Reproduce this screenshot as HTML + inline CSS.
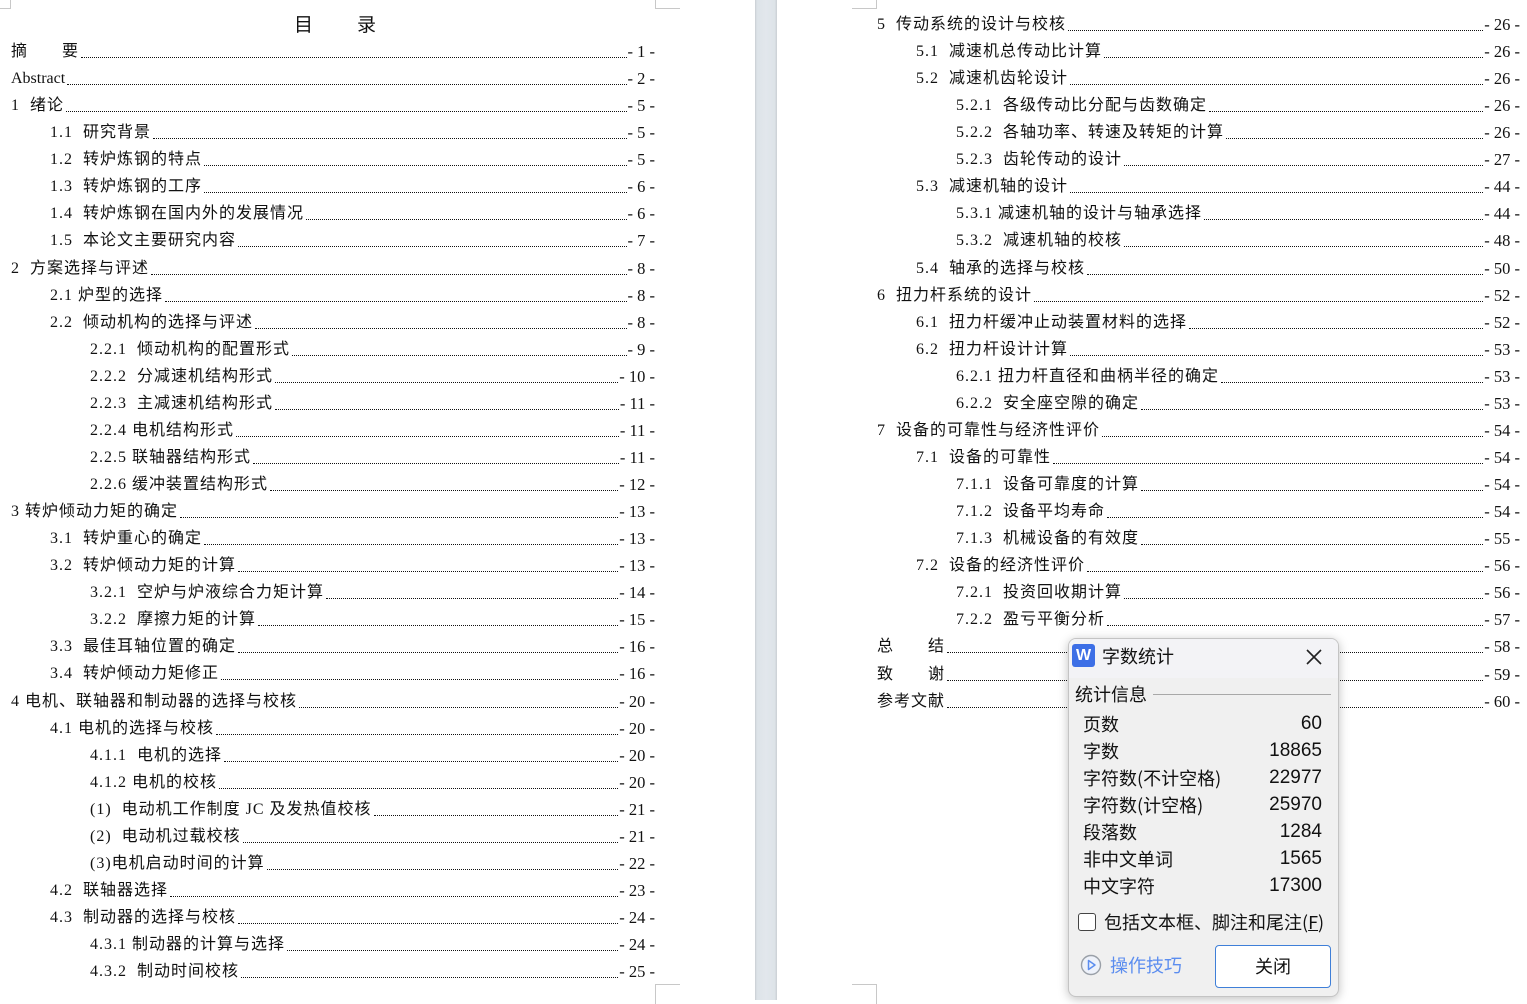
<!DOCTYPE html>
<html><head><meta charset="utf-8"><style>
*{margin:0;padding:0;box-sizing:border-box}
body{width:1527px;height:1000px;position:relative;background:#fff;overflow:hidden;font-family:"Liberation Serif","Noto Sans CJK SC",serif;color:#111}
.gap{position:absolute;left:755px;top:0;width:22px;height:1000px;background:linear-gradient(90deg,#c9ced3 0,#dde3e8 2px,#e2e7ec 50%,#dde3e8 90%,#c9ced3 100%)}
.r{position:absolute;height:22px;display:flex;align-items:flex-end;font-size:16px;line-height:22px;white-space:nowrap;margin-top:2px}
.t{font-family:"Liberation Serif","Noto Sans CJK SC",serif;letter-spacing:1px}
.d{flex:1;border-bottom:1px dotted #111;margin:0 1px 5px 2px}
.p{font-family:"Liberation Serif",serif;font-size:16.5px}
.L{right:872px}
.R{right:7px}
.cm{position:absolute;border-color:#c8c8c8;border-style:solid;border-width:0}
.dlg{position:absolute;left:1068px;top:638px;width:271px;height:359px;background:#f0f0f0;border:1px solid #c4c4c4;border-radius:8px;box-shadow:0 2px 10px rgba(0,0,0,.25);font-family:"Noto Sans CJK SC",sans-serif;color:#111;overflow:hidden}
.tb{position:absolute;left:0;top:0;width:100%;height:39px;background:#f3f3f6}
.row{position:absolute;left:14px;width:239px;font-size:18px;line-height:24px;display:flex;justify-content:space-between}
.row span:last-child{font-family:"Liberation Sans",sans-serif;font-size:19px}
</style></head><body>
<div class="gap"></div>
<div class="cm" style="left:655px;top:0;width:25px;height:9px;border-left-width:1px;border-bottom-width:1px"></div>
<div class="cm" style="left:0;top:0;width:11px;height:9px;border-right-width:1px;border-bottom-width:1px"></div>
<div class="cm" style="left:852px;top:0;width:25px;height:9px;border-right-width:1px;border-bottom-width:1px"></div>
<div class="cm" style="left:655px;top:984px;width:25px;height:20px;border-left-width:1px;border-top-width:1px"></div>
<div class="cm" style="left:852px;top:984px;width:25px;height:20px;border-right-width:1px;border-top-width:1px"></div>
<div style="position:absolute;left:294px;top:10px;font-size:19px;font-family:'Noto Sans CJK SC',sans-serif;letter-spacing:2px">目&emsp;&emsp;录</div>

<div class="r L" style="top:39px;left:11px"><span class="t">摘&emsp;&emsp;要</span><span class="d"></span><span class="p">- 1 -</span></div>
<div class="r L" style="top:66px;left:11px"><span class="t" style="letter-spacing:0">Abstract</span><span class="d"></span><span class="p">- 2 -</span></div>
<div class="r L" style="top:93px;left:11px"><span class="t">1&nbsp; 绪论</span><span class="d"></span><span class="p">- 5 -</span></div>
<div class="r L" style="top:120px;left:50px"><span class="t">1.1&nbsp; 研究背景</span><span class="d"></span><span class="p">- 5 -</span></div>
<div class="r L" style="top:147px;left:50px"><span class="t">1.2&nbsp; 转炉炼钢的特点</span><span class="d"></span><span class="p">- 5 -</span></div>
<div class="r L" style="top:174px;left:50px"><span class="t">1.3&nbsp; 转炉炼钢的工序</span><span class="d"></span><span class="p">- 6 -</span></div>
<div class="r L" style="top:201px;left:50px"><span class="t">1.4&nbsp; 转炉炼钢在国内外的发展情况</span><span class="d"></span><span class="p">- 6 -</span></div>
<div class="r L" style="top:228px;left:50px"><span class="t">1.5&nbsp; 本论文主要研究内容</span><span class="d"></span><span class="p">- 7 -</span></div>
<div class="r L" style="top:256px;left:11px"><span class="t">2&nbsp; 方案选择与评述</span><span class="d"></span><span class="p">- 8 -</span></div>
<div class="r L" style="top:283px;left:50px"><span class="t">2.1 炉型的选择</span><span class="d"></span><span class="p">- 8 -</span></div>
<div class="r L" style="top:310px;left:50px"><span class="t">2.2&nbsp; 倾动机构的选择与评述</span><span class="d"></span><span class="p">- 8 -</span></div>
<div class="r L" style="top:337px;left:90px"><span class="t">2.2.1&nbsp; 倾动机构的配置形式</span><span class="d"></span><span class="p">- 9 -</span></div>
<div class="r L" style="top:364px;left:90px"><span class="t">2.2.2&nbsp; 分减速机结构形式</span><span class="d"></span><span class="p">- 10 -</span></div>
<div class="r L" style="top:391px;left:90px"><span class="t">2.2.3&nbsp; 主减速机结构形式</span><span class="d"></span><span class="p">- 11 -</span></div>
<div class="r L" style="top:418px;left:90px"><span class="t">2.2.4 电机结构形式</span><span class="d"></span><span class="p">- 11 -</span></div>
<div class="r L" style="top:445px;left:90px"><span class="t">2.2.5 联轴器结构形式</span><span class="d"></span><span class="p">- 11 -</span></div>
<div class="r L" style="top:472px;left:90px"><span class="t">2.2.6 缓冲装置结构形式</span><span class="d"></span><span class="p">- 12 -</span></div>
<div class="r L" style="top:499px;left:11px"><span class="t">3 转炉倾动力矩的确定</span><span class="d"></span><span class="p">- 13 -</span></div>
<div class="r L" style="top:526px;left:50px"><span class="t">3.1&nbsp; 转炉重心的确定</span><span class="d"></span><span class="p">- 13 -</span></div>
<div class="r L" style="top:553px;left:50px"><span class="t">3.2&nbsp; 转炉倾动力矩的计算</span><span class="d"></span><span class="p">- 13 -</span></div>
<div class="r L" style="top:580px;left:90px"><span class="t">3.2.1&nbsp; 空炉与炉液综合力矩计算</span><span class="d"></span><span class="p">- 14 -</span></div>
<div class="r L" style="top:607px;left:90px"><span class="t">3.2.2&nbsp; 摩擦力矩的计算</span><span class="d"></span><span class="p">- 15 -</span></div>
<div class="r L" style="top:634px;left:50px"><span class="t">3.3&nbsp; 最佳耳轴位置的确定</span><span class="d"></span><span class="p">- 16 -</span></div>
<div class="r L" style="top:661px;left:50px"><span class="t">3.4&nbsp; 转炉倾动力矩修正</span><span class="d"></span><span class="p">- 16 -</span></div>
<div class="r L" style="top:689px;left:11px"><span class="t">4 电机、联轴器和制动器的选择与校核</span><span class="d"></span><span class="p">- 20 -</span></div>
<div class="r L" style="top:716px;left:50px"><span class="t">4.1 电机的选择与校核</span><span class="d"></span><span class="p">- 20 -</span></div>
<div class="r L" style="top:743px;left:90px"><span class="t">4.1.1&nbsp; 电机的选择</span><span class="d"></span><span class="p">- 20 -</span></div>
<div class="r L" style="top:770px;left:90px"><span class="t">4.1.2 电机的校核</span><span class="d"></span><span class="p">- 20 -</span></div>
<div class="r L" style="top:797px;left:90px"><span class="t">(1)&nbsp; 电动机工作制度 JC 及发热值校核</span><span class="d"></span><span class="p">- 21 -</span></div>
<div class="r L" style="top:824px;left:90px"><span class="t">(2)&nbsp; 电动机过载校核</span><span class="d"></span><span class="p">- 21 -</span></div>
<div class="r L" style="top:851px;left:90px"><span class="t">(3)电机启动时间的计算</span><span class="d"></span><span class="p">- 22 -</span></div>
<div class="r L" style="top:878px;left:50px"><span class="t">4.2&nbsp; 联轴器选择</span><span class="d"></span><span class="p">- 23 -</span></div>
<div class="r L" style="top:905px;left:50px"><span class="t">4.3&nbsp; 制动器的选择与校核</span><span class="d"></span><span class="p">- 24 -</span></div>
<div class="r L" style="top:932px;left:90px"><span class="t">4.3.1 制动器的计算与选择</span><span class="d"></span><span class="p">- 24 -</span></div>
<div class="r L" style="top:959px;left:90px"><span class="t">4.3.2&nbsp; 制动时间校核</span><span class="d"></span><span class="p">- 25 -</span></div>

<div class="r R" style="top:12px;left:877px"><span class="t">5&nbsp; 传动系统的设计与校核</span><span class="d"></span><span class="p">- 26 -</span></div>
<div class="r R" style="top:39px;left:916px"><span class="t">5.1&nbsp; 减速机总传动比计算</span><span class="d"></span><span class="p">- 26 -</span></div>
<div class="r R" style="top:66px;left:916px"><span class="t">5.2&nbsp; 减速机齿轮设计</span><span class="d"></span><span class="p">- 26 -</span></div>
<div class="r R" style="top:93px;left:956px"><span class="t">5.2.1&nbsp; 各级传动比分配与齿数确定</span><span class="d"></span><span class="p">- 26 -</span></div>
<div class="r R" style="top:120px;left:956px"><span class="t">5.2.2&nbsp; 各轴功率、转速及转矩的计算</span><span class="d"></span><span class="p">- 26 -</span></div>
<div class="r R" style="top:147px;left:956px"><span class="t">5.2.3&nbsp; 齿轮传动的设计</span><span class="d"></span><span class="p">- 27 -</span></div>
<div class="r R" style="top:174px;left:916px"><span class="t">5.3&nbsp; 减速机轴的设计</span><span class="d"></span><span class="p">- 44 -</span></div>
<div class="r R" style="top:201px;left:956px"><span class="t">5.3.1 减速机轴的设计与轴承选择</span><span class="d"></span><span class="p">- 44 -</span></div>
<div class="r R" style="top:228px;left:956px"><span class="t">5.3.2&nbsp; 减速机轴的校核</span><span class="d"></span><span class="p">- 48 -</span></div>
<div class="r R" style="top:256px;left:916px"><span class="t">5.4&nbsp; 轴承的选择与校核</span><span class="d"></span><span class="p">- 50 -</span></div>
<div class="r R" style="top:283px;left:877px"><span class="t">6&nbsp; 扭力杆系统的设计</span><span class="d"></span><span class="p">- 52 -</span></div>
<div class="r R" style="top:310px;left:916px"><span class="t">6.1&nbsp; 扭力杆缓冲止动装置材料的选择</span><span class="d"></span><span class="p">- 52 -</span></div>
<div class="r R" style="top:337px;left:916px"><span class="t">6.2&nbsp; 扭力杆设计计算</span><span class="d"></span><span class="p">- 53 -</span></div>
<div class="r R" style="top:364px;left:956px"><span class="t">6.2.1 扭力杆直径和曲柄半径的确定</span><span class="d"></span><span class="p">- 53 -</span></div>
<div class="r R" style="top:391px;left:956px"><span class="t">6.2.2&nbsp; 安全座空隙的确定</span><span class="d"></span><span class="p">- 53 -</span></div>
<div class="r R" style="top:418px;left:877px"><span class="t">7&nbsp; 设备的可靠性与经济性评价</span><span class="d"></span><span class="p">- 54 -</span></div>
<div class="r R" style="top:445px;left:916px"><span class="t">7.1&nbsp; 设备的可靠性</span><span class="d"></span><span class="p">- 54 -</span></div>
<div class="r R" style="top:472px;left:956px"><span class="t">7.1.1&nbsp; 设备可靠度的计算</span><span class="d"></span><span class="p">- 54 -</span></div>
<div class="r R" style="top:499px;left:956px"><span class="t">7.1.2&nbsp; 设备平均寿命</span><span class="d"></span><span class="p">- 54 -</span></div>
<div class="r R" style="top:526px;left:956px"><span class="t">7.1.3&nbsp; 机械设备的有效度</span><span class="d"></span><span class="p">- 55 -</span></div>
<div class="r R" style="top:553px;left:916px"><span class="t">7.2&nbsp; 设备的经济性评价</span><span class="d"></span><span class="p">- 56 -</span></div>
<div class="r R" style="top:580px;left:956px"><span class="t">7.2.1&nbsp; 投资回收期计算</span><span class="d"></span><span class="p">- 56 -</span></div>
<div class="r R" style="top:607px;left:956px"><span class="t">7.2.2&nbsp; 盈亏平衡分析</span><span class="d"></span><span class="p">- 57 -</span></div>
<div class="r R" style="top:634px;left:877px"><span class="t">总&emsp;&emsp;结</span><span class="d"></span><span class="p">- 58 -</span></div>
<div class="r R" style="top:662px;left:877px"><span class="t">致&emsp;&emsp;谢</span><span class="d"></span><span class="p">- 59 -</span></div>
<div class="r R" style="top:689px;left:877px"><span class="t">参考文献</span><span class="d"></span><span class="p">- 60 -</span></div>

<div class="dlg">
 <div class="tb"></div>
 <div style="position:absolute;left:3px;top:5px;width:23px;height:23px;background:#3d6fe6;border-radius:3px;color:#fff;font:bold 16px/23px 'Liberation Sans',sans-serif;text-align:center">W</div>
 <div style="position:absolute;left:33px;top:4px;font-size:18px;line-height:26px">字数统计</div>
 <svg style="position:absolute;left:236px;top:9px" width="18" height="18" viewBox="0 0 18 18"><path d="M2 2L16 16M16 2L2 16" stroke="#222" stroke-width="1.6"/></svg>
 <div style="position:absolute;left:6px;top:42px;font-size:18px;line-height:26px">统计信息</div>
 <div style="position:absolute;left:84px;top:55px;width:178px;height:1px;background:#a8a8a8"></div>
 <div class="row" style="top:73px"><span>页数</span><span>60</span></div>
 <div class="row" style="top:100px"><span>字数</span><span>18865</span></div>
 <div class="row" style="top:127px"><span>字符数(不计空格)</span><span>22977</span></div>
 <div class="row" style="top:154px"><span>字符数(计空格)</span><span>25970</span></div>
 <div class="row" style="top:181px"><span>段落数</span><span>1284</span></div>
 <div class="row" style="top:208px"><span>非中文单词</span><span>1565</span></div>
 <div class="row" style="top:235px"><span>中文字符</span><span>17300</span></div>
 <div style="position:absolute;left:9px;top:274px;width:18px;height:18px;border:1px solid #444;border-radius:3px;background:#fff"></div>
 <div style="position:absolute;left:35px;top:270px;font-size:18px;line-height:26px">包括文本框、脚注和尾注(<u>F</u>)</div>
 <svg style="position:absolute;left:11px;top:315px" width="22" height="22" viewBox="0 0 22 22"><circle cx="11" cy="11" r="9.5" fill="#eef2fa" stroke="#9aa0a8" stroke-width="1.4"/><path d="M8.5 6.5L15 11L8.5 15.5Z" fill="none" stroke="#5b8def" stroke-width="1.5" stroke-linejoin="round"/></svg>
 <div style="position:absolute;left:41px;top:313px;font-size:18px;line-height:26px;color:#5b8def">操作技巧</div>
 <div style="position:absolute;left:146px;top:306px;width:116px;height:43px;background:#fff;border:1px solid #3f7fd8;border-radius:4px;font-size:18px;line-height:41px;text-align:center">关闭</div>
</div>
</body></html>
